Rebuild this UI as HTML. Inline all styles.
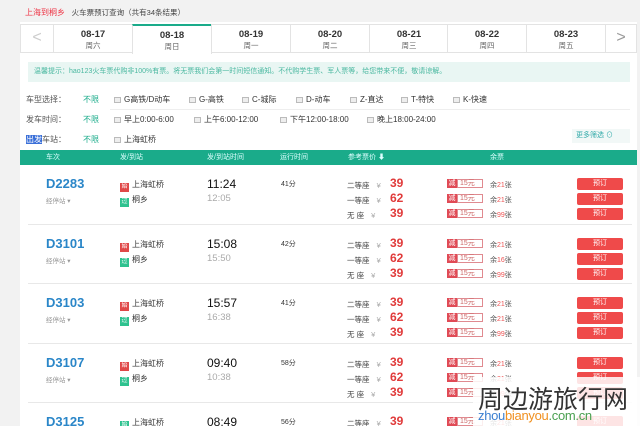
<!DOCTYPE html>
<html><head><meta charset="utf-8"><style>
*{margin:0;padding:0;box-sizing:border-box}
html,body{width:640px;height:426px;overflow:hidden}
body{background:#f2f2f2;font-family:"Liberation Sans","Noto Sans CJK SC",sans-serif;position:relative;color:#333}
.a{position:absolute;white-space:nowrap}
.s{font-size:8px}
.tab{position:absolute;top:24px;height:29px;background:#fff;border:1px solid #e3e3e3;text-align:center}
.tab b{display:block;font-size:9.5px;margin-top:4px;color:#333}
.tab i{display:block;font-style:normal;font-size:7.5px;color:#666;margin-top:0}
.cb{display:inline-block;width:7px;height:6px;border:1px solid #bbb;background:#eee;margin-right:3px;vertical-align:-1px}
.g{color:#1aab8a}
.badge{display:inline-block;width:9px;height:9px;color:#fff;font-size:6px;text-align:center;line-height:9px;margin-right:3px;vertical-align:-1px}
.red{color:#e03a3a;font-weight:bold;font-size:12px}
.btn{position:absolute;left:577px;width:46px;height:12px;background:#ef4a4a;border-radius:2px;color:#fff;font-size:7px;text-align:center;line-height:12px}
.jian{position:absolute;left:447px;font-size:7px}
.jian span{display:inline-block;background:#e04a55;color:#fff;width:10px;text-align:center;height:9px;line-height:9px}
.jian em{display:inline-block;border:1px solid #e08a90;color:#c66;font-style:normal;width:26px;height:9px;line-height:7px;padding-left:2px}
</style></head><body>
<div class="a" style="left:20px;top:22px;width:617px;height:404px;background:#fff"></div>
<div class="a" style="left:25px;top:7px;font-size:8px"><span style="color:#e34">上海到桐乡</span>&nbsp;&nbsp;&nbsp;<span style="color:#444;font-size:7.5px">火车票预订查询（共有34条结果）</span></div>
<div class="tab" style="left:20px;width:34px;color:#ccc;font-size:16px;line-height:26px">&lt;</div>
<div class="tab" style="left:53px;width:80px"><b>08-17</b><i>周六</i></div>
<div class="tab" style="left:132px;width:80px;border-top:2px solid #1aab8a;border-bottom:none;height:30px"><b>08-18</b><i>周日</i></div>
<div class="tab" style="left:211px;width:80px"><b>08-19</b><i>周一</i></div>
<div class="tab" style="left:290px;width:80px"><b>08-20</b><i>周二</i></div>
<div class="tab" style="left:369px;width:80px"><b>08-21</b><i>周三</i></div>
<div class="tab" style="left:447px;width:80px"><b>08-22</b><i>周四</i></div>
<div class="tab" style="left:526px;width:80px"><b>08-23</b><i>周五</i></div>
<div class="tab" style="left:605px;width:32px;color:#999;font-size:16px;line-height:26px">&gt;</div>
<div class="a" style="left:28px;top:62px;width:602px;height:20px;background:#e9f6f3;color:#4ab8a0;font-size:7px;line-height:20px;padding-left:6px">温馨提示：hao123火车票代购非100%有票。将无票我们会第一时间短信通知。不代购学生票、军人票等，给您带来不便，敬请谅解。</div>
<div class="a s" style="left:26px;top:94px;color:#555">车型选择：</div><div class="a s g" style="left:83px;top:94px">不限</div>
<div class="a s" style="left:114px;top:94px"><span class="cb"></span>G高铁/D动车</div>
<div class="a s" style="left:189px;top:94px"><span class="cb"></span>G-高铁</div>
<div class="a s" style="left:242px;top:94px"><span class="cb"></span>C-城际</div>
<div class="a s" style="left:296px;top:94px"><span class="cb"></span>D-动车</div>
<div class="a s" style="left:350px;top:94px"><span class="cb"></span>Z-直达</div>
<div class="a s" style="left:401px;top:94px"><span class="cb"></span>T-特快</div>
<div class="a s" style="left:453px;top:94px"><span class="cb"></span>K-快速</div>
<div class="a" style="left:110px;top:109px;width:520px;border-top:1px solid #eee"></div>
<div class="a s" style="left:26px;top:114px;color:#555">发车时间：</div><div class="a s g" style="left:83px;top:114px">不限</div>
<div class="a s" style="left:114px;top:114px"><span class="cb"></span>早上0:00-6:00</div>
<div class="a s" style="left:194px;top:114px"><span class="cb"></span>上午6:00-12:00</div>
<div class="a s" style="left:280px;top:114px"><span class="cb"></span>下午12:00-18:00</div>
<div class="a s" style="left:367px;top:114px"><span class="cb"></span>晚上18:00-24:00</div>
<div class="a s" style="left:26px;top:134px;color:#555"><span style="background:#3a6fd8;color:#fff">出发</span>车站：</div><div class="a s g" style="left:83px;top:134px">不限</div>
<div class="a s" style="left:114px;top:134px"><span class="cb"></span>上海虹桥</div>
<div class="a" style="left:572px;top:129px;width:58px;height:14px;background:#f2f8f7;color:#3aa;font-size:7px;line-height:14px;padding-left:4px">更多筛选 ⊙</div>
<div class="a" style="left:20px;top:150px;width:617px;height:15px;background:#1aab8a;color:#dff;font-size:7px;line-height:15px">
<span class="a" style="left:26px">车次</span><span class="a" style="left:100px">发/到站</span><span class="a" style="left:187px">发/到站时间</span><span class="a" style="left:260px">运行时间</span><span class="a" style="left:328px">参考票价 ⬇</span><span class="a" style="left:470px">余票</span></div>
<div id="rows"></div>
<script>
var d=[["D2283","11:24","12:05","41分",["21","21","99"]],["D3101","15:08","15:50","42分",["21","16","99"]],["D3103","15:57","16:38","41分",["21","21","99"]],["D3107","09:40","10:38","58分",["21","21","99"]],["D3125","08:49","09:45","56分",["21","21","99"]]];
var h="";
d.forEach(function(r,i){var t=165+Math.round(59.5*i);
if(i)h+='<div class="a" style="left:28px;top:'+(t-1)+'px;width:604px;border-top:1px solid #e8e8e8"></div>';
h+='<div class="a" style="left:46px;top:'+(t+11)+'px;font-size:13px;font-weight:bold;color:#2a86c8">'+r[0]+'</div>';
h+='<div class="a" style="left:46px;top:'+(t+30)+'px;font-size:6.5px;color:#999">经停站 ▾</div>';
h+='<div class="a s" style="left:120px;top:'+(t+14)+'px"><span class="badge" style="background:'+(i==4?'#2ec28f':'#e04848')+'">始</span>上海虹桥</div>';
h+='<div class="a s" style="left:120px;top:'+(t+29)+'px"><span class="badge" style="background:#2ec28f">过</span>桐乡</div>';
h+='<div class="a" style="left:207px;top:'+(t+12)+'px;font-size:12px;color:#111">'+r[1]+'</div>';
h+='<div class="a" style="left:207px;top:'+(t+28)+'px;font-size:9.5px;color:#aaa">'+r[2]+'</div>';
h+='<div class="a" style="left:281px;top:'+(t+14)+'px;font-size:7px">'+r[3]+'</div>';
var seats=[["二等座","39"],["一等座","62"],["无 座","39"]];
seats.forEach(function(s,j){var y=t+12+j*15;
h+='<div class="a" style="left:347px;top:'+(y+3)+'px;font-size:7.5px;color:#444">'+s[0]+' <span style="color:#aaa;margin-left:5px">¥</span></div>';
h+='<div class="a red" style="left:390px;top:'+(y-1)+'px">'+s[1]+'</div>';
h+='<div class="jian" style="top:'+(y+2)+'px"><span>减</span><em>15元</em></div>';
h+='<div class="a" style="left:490px;top:'+(y+3)+'px;font-size:7px;color:#555">余<span style="color:#e55">'+r[4][j]+'</span>张</div>';
h+='<div class="btn" style="top:'+(y+1)+'px">预订</div>';});
});
document.getElementById("rows").innerHTML=h;
</script>
<div class="a" style="left:473px;top:377px;width:167px;height:49px;background:rgba(255,255,255,0.85)"></div>
<div class="a" style="left:478px;top:380px;font-size:25px;color:#333">周边游旅行网</div>
<div class="a" style="left:478px;top:408px;font-size:13px;letter-spacing:-0.3px"><span style="color:#3b7fd0">zhou</span><span style="color:#f09020">bianyou</span><span style="color:#4aa050">.com.cn</span></div>
</body></html>
